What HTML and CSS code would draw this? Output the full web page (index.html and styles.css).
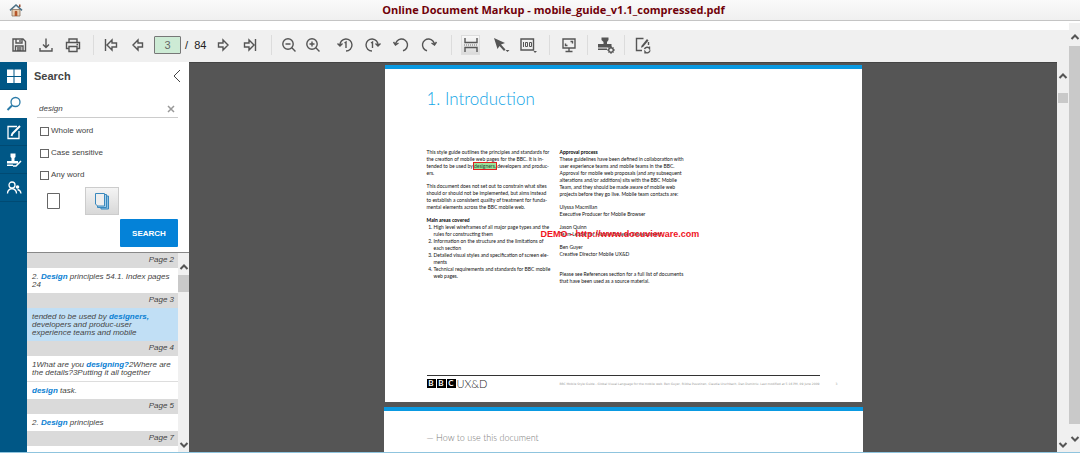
FILE: index.html
```html
<!DOCTYPE html>
<html lang="en">
<head>
<meta charset="utf-8">
<title>Online Document Markup</title>
<link rel="stylesheet" href="styles.css">
</head>
<body>
<div class="app">
  <header class="titlebar">
    <a class="home" href="#" aria-label="Home">
      <svg width="14" height="14" viewBox="0 0 14 14"><path d="M3 6.500h8V13H3z" fill="#e6cdb0" stroke="#8a7461" stroke-width=".8"/><path d="M10 1.500h1.500V4H10z" fill="#9b4a2c"/><path d="M1 7.300 7 2l6 5.300" fill="none" stroke="#4d7085" stroke-width="1.600"/><path d="M5.700 13V8.500q1.300-1.500 2.600 0V13z" fill="#b5562a"/></svg>
    </a>
    <h1 class="doc-title">Online Document Markup - mobile_guide_v1.1_compressed.pdf</h1>
  </header>
  <div class="shell">
    <div class="workspace">
      <div class="toolbar">
        <button class="tool" aria-label="Save"><svg viewBox="0 0 18 18"><path d="M3 3h10l2.500 2.500V15H3zM6 3v4h6V3M10 4v2M5.500 15v-5h7.500v5M7 12h4.500M7 14h4.500"/></svg></button>
        <button class="tool" aria-label="Download"><svg viewBox="0 0 18 18"><path d="M9 2.500v9M6 8.500l3 3 3-3M3 12v3h12v-3"/></svg></button>
        <button class="tool" aria-label="Print"><svg viewBox="0 0 18 18"><path d="M5 6.500V3h8v3.500M5 12.500H2.500v-6h13v6H13M5 10.500h8V15.500H5zM12.500 8.500h1.500"/></svg></button>
        <span class="sep"></span>
        <button class="tool" aria-label="First page"><svg viewBox="0 0 18 18"><path d="M3.500 3v12M5 9l5-5v3h4.500v4H10v3z"/></svg></button>
        <button class="tool" aria-label="Previous page"><svg viewBox="0 0 18 18"><path d="M4 9l5-5v3h4.500v4H9v3z"/></svg></button>
        <input class="page-input" type="text" value="3" aria-label="Page number">
        <span class="page-total">/&nbsp; 84</span>
        <button class="tool" aria-label="Next page"><svg viewBox="0 0 18 18"><path d="M14 9 9 4v3H4.500v4H9v3z"/></svg></button>
        <button class="tool" aria-label="Last page"><svg viewBox="0 0 18 18"><path d="M14.500 3v12M13 9 8 4v3H3.500v4H8v3z"/></svg></button>
        <span class="sep sep-wide"></span>
        <button class="tool tool-small" aria-label="Zoom out"><svg viewBox="0 0 18 18"><path d="M11.800 11.800 15.500 15.500M5.500 8h5"/><circle cx="8" cy="8" r="5.200"/></svg></button>
        <button class="tool tool-small" aria-label="Zoom in"><svg viewBox="0 0 18 18"><path d="M11.800 11.800 15.500 15.500M5.500 8h5M8 5.500v5"/><circle cx="8" cy="8" r="5.200"/></svg></button>
        <span class="spacer"></span>
        <button class="tool tool-large" aria-label="Rotate page left"><svg viewBox="0 0 18 18"><path d="M4 9.500A6 6 0 1 1 10 15M1.500 7.500l2.500 2.500 2.500-2.500M8.500 7l1.500-1V12"/></svg></button>
        <button class="tool tool-large" aria-label="Rotate page right"><svg viewBox="0 0 18 18"><path d="M14 9.500A6 6 0 1 0 8 15M16.500 7.500l-2.500 2.500-2.500-2.500M7 7l1.500-1V12"/></svg></button>
        <button class="tool tool-large" aria-label="Rotate left"><svg viewBox="0 0 18 18"><path d="M3.500 9A6 6 0 1 1 11 14.800M1.500 6l2 3L6.500 7"/></svg></button>
        <button class="tool tool-large" aria-label="Rotate right"><svg viewBox="0 0 18 18"><path d="M14.500 9A6 6 0 1 0 7 14.800M16.500 6l-2 3L11.500 7"/></svg></button>
        <span class="sep sep-wide"></span>
        <button class="tool tool-active" aria-label="Continuous view"><svg viewBox="0 0 18 18"><path d="M3 2v4.500h12V2M3 16v-4.500h12V16"/><path d="M2 9h14" stroke="#999" stroke-dasharray="1 1"/></svg></button>
        <button class="tool" aria-label="Selection"><svg viewBox="0 0 18 18"><path class="solid" d="M2 2l11 5-4 1.500 4.500 5-1.500 1.500-4.500-5L5.500 13z"/><path class="solid" d="M13.500 14h4L15.500 16z"/></svg></button>
        <button class="tool" aria-label="Zoom 100"><svg viewBox="0 0 18 18"><path d="M2 3h12.500v11H2z"/><path d="M4.500 6v5M6.500 6.500h2v4h-2zM10.500 6.500h2v4h-2z" stroke-width="1"/><path class="solid" d="M14.500 15h3.500L16 17z"/></svg></button>
        <span class="sep sep-wide"></span>
        <button class="tool" aria-label="Full screen"><svg viewBox="0 0 18 18"><path d="M3 3h12v9H3zM9 12v3M5.500 15.500h7M10.500 5.500h2v2M7.500 9.500h-2v-2"/></svg></button>
        <span class="sep sep-narrow"></span>
        <button class="tool" aria-label="Stamp settings"><svg viewBox="0 0 18 18"><path class="solid" d="M4.500 1.500h7v2.500L10 6v2h4.500v3.500H1V8h5.500V6L4.500 4zM1 12.500H10V14H1z"/><circle cx="14" cy="14" r="2.300"/><path d="M14 10v2M14 16v2M10 14h2M16 14h2M11.500 11.500l1 1M15.500 15.500l1 1M16.500 11.500l-1 1M12.500 15.500l-1 1" stroke-width="1"/></svg></button>
        <span class="sep sep-narrow"></span>
        <button class="tool" aria-label="Edit annotations"><svg viewBox="0 0 18 18"><path d="M9.500 2.500H2.500v12H8M14.500 6v3"/><path d="M13 3l1.500 1.500-5.500 6.500-2 .8.500-2z" class="solid"/><path d="M10.500 13a2.800 2.800 0 0 1 5-.5v-2M16 14.500a2.800 2.800 0 0 1-5 1.200v1.800"/></svg></button>
      </div>
      <div class="main">
        <nav class="rail">
          <button class="tab" aria-label="Thumbnails"><svg viewBox="0 0 16 16"><path class="fill" d="M1 1.500h6.500V8H1zM8.500 1.500H15V8H8.500zM1 9h6.500v6H1zM8.500 9H15v6H8.500z"/></svg></button>
          <button class="tab tab-on" aria-label="Search"><svg viewBox="0 0 16 16"><circle cx="9.500" cy="6" r="4.500"/><path d="M6 9.500 1.500 14" stroke-width="2"/></svg></button>
          <button class="tab" aria-label="Annotations"><svg viewBox="0 0 16 16"><path d="M11 2.500H2v12h11V7"/><path d="M14 2 6.500 9.500 5.500 12" stroke-width="2"/></svg></button>
          <button class="tab" aria-label="Stamps"><svg viewBox="0 0 16 16"><path class="fill" d="M4.500 1.500h5V5L8.500 6v3H12v2.500H1V9h4.500V6l-1-1zM1 12.500h6V14H1z"/><path d="M7 14h3l5-5" stroke-width="1.500"/></svg></button>
          <button class="tab" aria-label="Users"><svg viewBox="0 0 16 16"><circle cx="6" cy="5" r="3"/><path d="M1.500 13.500q0-4 4.500-5 4.500 1 4.500 5"/><circle class="fill" cx="11.500" cy="7" r="1.800"/><path d="M11.500 9.500q3 .5 3.500 4"/></svg></button>
        </nav>
        <aside class="panel">
          <form class="search">
            <div class="search-head">
              <h2>Search</h2>
              <button class="collapse" type="button" aria-label="Collapse"><svg width="8" height="14" viewBox="0 0 8 14"><path d="M7 1 1 7l6 6" fill="none" stroke="#444"/></svg></button>
            </div>
            <div class="query">
              <input type="text" value="design" aria-label="Search text">
              <button type="button" aria-label="Clear"><svg width="8" height="8" viewBox="0 0 8 8"><path d="M1 1l6 6M7 1 1 7" stroke="#999" stroke-width="1.500"/></svg></button>
            </div>
            <label class="check"><input type="checkbox">Whole word</label>
            <label class="check"><input type="checkbox">Case sensitive</label>
            <label class="check"><input type="checkbox">Any word</label>
            <div class="scope">
              <button type="button" aria-label="Current page"><svg width="16" height="18" viewBox="0 0 16 18"><path d="M1.500 1.500h12v15h-12z" fill="#fff" stroke="#666"/></svg></button>
              <button type="button" class="scope-on" aria-label="All pages"><svg width="16" height="18" viewBox="0 0 16 18"><path d="M5.500 4h9v13H7z" fill="#8cc0e2" stroke="#3988bd"/><path d="M3.500 2.500h9v13h-9z" fill="#a9d1eb" stroke="#3988bd"/><path d="M1.500 1.500h9V14h-7l-2-2z" fill="#eee" stroke="#3988bd"/></svg></button>
            </div>
            <button class="submit" type="button">SEARCH</button>
          </form>
          <div class="results">
            <div class="list">
              <h3>Page 2</h3>
              <p>2. <b>Design</b> principles 54.1. Index pages<br>24</p>
              <h3>Page 3</h3>
              <p class="current">tended to be used by <b>designers,</b><br>developers and produc-user<br>experience teams and mobile</p>
              <h3>Page 4</h3>
              <p>1What are you <b>designing?</b>2Where are<br>the details?3Putting it all together</p>
              <p class="next"><b>design</b> task.</p>
              <h3>Page 5</h3>
              <p>2. <b>Design</b> principles</p>
              <h3>Page 7</h3>
            </div>
            <div class="bar list-bar">
              <svg class="arrow" viewBox="0 0 10 6"><path d="M1.500 5 5 1.500 8.500 5"/></svg>
              <span class="thumb"></span>
              <svg class="arrow" viewBox="0 0 10 6"><path d="M1.500 1 5 4.500 8.500 1"/></svg>
            </div>
          </div>
        </aside>
        <main class="viewer">
          <article class="page">
            <h2 class="chapter">1. Introduction</h2>
            <div class="columns">
              <div>
                <p>This style guide outlines the principles and standards for<br>the creation of mobile web pages for the BBC. It is in-<br>tended to be used by <mark>designers,</mark> developers and produc-<br>ers.</p>
                <p>This document does not set out to constrain what sites<br>should or should not be implemented, but aims instead<br>to establish a consistent quality of treatment for funda-<br>mental elements across the BBC mobile web.</p>
                <h3>Main areas covered</h3>
                <ol>
                  <li>High level wireframes of all major page types and the<br>rules for constructing them</li>
                  <li>Information on the structure and the limitations of<br>each section</li>
                  <li>Detailed visual styles and specification of screen ele-<br>ments</li>
                  <li>Technical requirements and standards for BBC mobile<br>web pages.</li>
                </ol>
              </div>
              <div>
                <h3>Approval process</h3>
                <p>These guidelines have been defined in collaboration with<br>user experience teams and mobile teams in the BBC.<br>Approval for mobile web proposals (and any subsequent<br>alterations and/or additions) sits with the BBC Mobile<br>Team, and they should be made aware of mobile web<br>projects before they go live. Mobile team contacts are:</p>
                <p>Ulyssa Macmillan<br>Executive Producer for Mobile Browser</p>
                <p class="stamped">Jason Quinn<br>Team Leader for Mobile Browser Development<span class="demo">DEMO - http://www.docuvieware.com</span></p>
                <p>Ben Guyer<br>Creative Director Mobile UX&amp;D</p>
                <p class="closing">Please see References section for a full list of documents<br>that have been used as a source material.</p>
              </div>
            </div>
            <footer class="page-foot">
              <div class="logo"><b>B</b><b>B</b><b>C</b><span>UX&amp;D</span></div>
              <small>BBC Mobile Style Guide - Global Visual Language for the mobile web. Ben Guyer, Riikka Puustinen, Claudia Urschbach, Dan Dumitriu. Last modified at 5:16 PM, 09 June 2009</small>
              <small class="folio">3</small>
            </footer>
          </article>
          <article class="page page-next">
            <h2 class="subject">— How to use this document</h2>
          </article>
        </main>
        <div class="bar view-bar">
          <svg class="arrow" viewBox="0 0 10 6"><path d="M1.500 5 5 1.500 8.500 5"/></svg>
          <span class="thumb"></span>
          <svg class="arrow" viewBox="0 0 10 6"><path d="M1.500 1 5 4.500 8.500 1"/></svg>
        </div>
      </div>
    </div>
    <div class="bar shell-bar">
      <svg class="arrow" viewBox="0 0 10 6"><path d="M1.500 5 5 1.500 8.500 5"/></svg>
      <span class="thumb"></span>
      <svg class="arrow" viewBox="0 0 10 6"><path d="M1.500 1 5 4.500 8.500 1"/></svg>
    </div>
  </div>
</div>
</body>
</html>
```
FILE: styles.css
```css
* { box-sizing: border-box; }
body, h1, h2, h3, p, ol { margin: 0; padding: 0; }
body { font-family: "Liberation Sans", Arial, sans-serif; font-size: 8px; color: #444; background: #fff; }
button { border: 0; padding: 0; background: none; font: inherit; color: inherit; display: flex; align-items: center; justify-content: center; }

.app { height: 100vh; display: flex; flex-direction: column; overflow: hidden; border-bottom: 1px solid #8fc4de; }
.titlebar { display: flex; align-items: center; flex: none; height: 21px; padding-left: 9px; background: linear-gradient(#fafafa, #f0f0f0); border-bottom: 1px solid #c4c4c4; }
.home { display: flex; }
.doc-title { flex: 1; padding-left: 4px; text-align: center; font: bold 11px/20px "Open Sans", Tahoma, sans-serif; color: #700008; }

.shell { flex: 1; min-height: 0; display: flex; padding-top: 2px; }
.workspace { flex: 1; min-width: 0; display: flex; flex-direction: column; padding-top: 7px; }

.toolbar { display: flex; align-items: center; flex: none; height: 32px; padding: 0 0 2px 5px; background: #f0f0f0; }
.tool { width: 27px; height: 20px; flex: none; }
.tool-small { width: 24px; }
.tool-large { width: 28px; }
.tool svg { width: 18px; height: 18px; flex: none; fill: none; stroke: #555; stroke-width: 1.4; }
.tool .solid { fill: #555; stroke: none; }
.tool-active { width: 19px; background: linear-gradient(#f8f8f8, #dadada); border: 1px solid #ddd; margin: 0 7px 0 4px; }
.sep { width: 1px; height: 20px; flex: none; margin: 0 3px 0 7px; background: #dcdcdc; }
.sep-wide { margin: 0 5px 0 8px; }
.sep-narrow { margin: 0 4px 0 5px; }
.spacer { width: 6px; flex: none; }
.page-input { width: 27px; height: 18px; margin-left: 3px; padding: 0; border: 1px solid #777; border-radius: 1px; background: #cdebd5; text-align: center; font: 11px "Liberation Sans", sans-serif; color: #666; }
.page-total { width: 28px; padding-left: 4px; font-size: 11px; color: #222; white-space: nowrap; }

.main { flex: 1; min-height: 0; display: flex; }
.rail { width: 27px; flex: none; background: #005786; }
.tab { width: 27px; height: 28px; border-bottom: 1px solid #004a73; color: #fff; }
.tab svg { width: 16px; height: 16px; fill: none; stroke: currentColor; stroke-width: 1.3; }
.tab .fill { fill: currentColor; stroke: none; }
.tab-on { background: #fff; color: #2b7ba8; border-color: #fff; }

.panel { width: 162px; flex: none; display: flex; flex-direction: column; background: #fff; }
.search { display: flex; flex-direction: column; height: 190px; flex: none; padding: 7px 8px 0 7px; }
.search-head { display: flex; justify-content: space-between; align-items: center; height: 14px; }
.search-head h2 { font-size: 11px; line-height: 14px; }
.query { display: flex; align-items: center; margin: 18px 3px 1px; height: 17px; border-bottom: 1px solid #ccc; }
.query input { flex: 1; min-width: 0; padding: 0 2px; border: 0; background: none; font: italic 8px/14px "Liberation Sans", sans-serif; color: #444; }
.query button { width: 14px; }
.check { display: flex; align-items: center; gap: 2px; height: 22px; padding-left: 6px; color: #444; }
.check input { appearance: none; width: 9px; height: 9px; margin: 2px 0 0; border: 1px solid #666; background: #fff; }
.scope { display: flex; gap: 14px; margin: 2px 0 4px 3px; }
.scope button { width: 34px; height: 28px; }
.scope .scope-on { background: linear-gradient(#f4f4f4, #d8d8d8); border: 1px solid #ccc; }
.submit { align-self: flex-end; width: 58px; height: 28px; margin-right: 3px; border-radius: 1px; background: #0482d8; color: #fff; font-weight: bold; }

.results { flex: 1; min-height: 0; display: flex; overflow: hidden; border-top: 1px solid #888; }
.list { flex: 1; min-width: 0; line-height: 8px; font-style: italic; color: #444; }
.list h3 { height: 15px; padding: 0 4px; background: #dadada; text-align: right; font-size: 8px; font-weight: normal; line-height: 14px; }
.list p { padding: 5px 4px 4px 5px; white-space: nowrap; }
.list b { color: #0b7fd3; }
.list .current { background: #c1dff5; }
.list .next { border-top: 1px solid #ddd; }

.bar { flex: none; display: flex; flex-direction: column; background: #f0f0f0; }
.arrow { width: 10px; height: 6px; flex: none; align-self: center; fill: none; stroke: #555; stroke-width: 2; }
.arrow:last-child { margin-top: auto; }
.list-bar { width: 11px; padding: 11px 0 4px; }
.list-bar .thumb { height: 17px; margin-top: 5px; background: #c9c9c9; }
.view-bar { width: 12px; padding: 11px 0 4px; }
.view-bar .thumb { height: 10px; margin: 14px 1px 0; background: #c9c9c9; }
.shell-bar { width: 11px; padding: 11px 0 10px; }
.shell-bar .thumb { flex: 1; margin: 6px 0 12px; background: #c9c9c9; }

.viewer { flex: 1; min-width: 0; overflow: hidden; padding-top: 3px; background: #555; font-family: Lato, "Gill Sans", sans-serif; box-shadow: inset 0 1px #444; }
.page { width: 477px; margin: 0 auto; padding: 18px 42px 0; background: #fff; border-top: 4px solid #0a9ae2; height: 337px; display: flex; flex-direction: column; white-space: nowrap; }
.chapter { font-size: 17px; line-height: 24px; font-weight: 300; color: #12a5e6; }
.columns { display: grid; grid-template-columns: 133px 1fr; margin-top: 38px; font-size: 5px; line-height: 7px; color: #111; }
.columns h3 { font-size: 5px; color: #000; }
.columns p { margin-bottom: 6px; }
.columns ol { list-style-position: outside; padding-left: 7px; }
.columns .closing { margin-top: 13px; }
mark { background: #9be29b; color: #243; outline: 1px solid #e02020; }
.stamped { position: relative; }
.demo { position: absolute; left: -19px; top: 5px; font: bold 9px/11px "Liberation Sans", sans-serif; color: #f0141e; }
.page-foot { display: flex; align-items: center; margin-top: auto; margin-bottom: 11px; height: 16px; border-top: 1px solid #333; }
.page-foot small { flex: 1; text-align: right; font: 3px/6px "DejaVu Sans", sans-serif; color: #999; }
.page-foot .folio { flex: none; width: 0; text-indent: 16px; text-align: left; }
.logo { display: flex; gap: 1px; font-size: 11px; line-height: 9px; color: #222; }
.logo b { width: 9px; height: 9px; background: #000; color: #fff; font-size: 8px; text-align: center; }
.logo span { font-weight: 300; }
.page-next { width: 479px; margin-top: 5px; padding: 19px 43px 0; }
.subject { font-size: 9px; line-height: 16px; font-weight: 300; color: #777; }
```
